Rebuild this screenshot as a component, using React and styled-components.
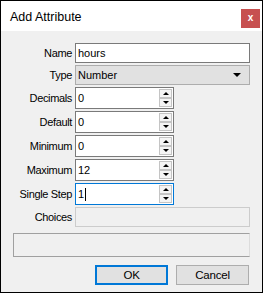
import React from "react";
import styled, { createGlobalStyle } from "styled-components";

const GlobalStyle = createGlobalStyle`
  body {
    margin: 0;
    font-family: "Liberation Sans", Arial, sans-serif;
    color: #000;
  }
`;

const Window = styled.div`
  width: 263px;
  height: 293px;
  box-sizing: border-box;
  border: 1px solid #000;
  display: flex;
  flex-direction: column;
  background: #f0f0f0;
`;

const TitleBar = styled.div`
  height: 30px;
  background: #fff;
  display: flex;
  align-items: flex-start;
  justify-content: space-between;
  padding: 0 2px 0 9px;
`;

const Title = styled.div`
  font-size: 12.5px;
  margin-top: 9px;
`;

const Close = styled.div`
  width: 19px;
  height: 19px;
  margin-top: 8px;
  background: #c75050;
  color: #fff;
  font-weight: bold;
  font-size: 10px;
  display: flex;
  align-items: center;
  justify-content: center;
  line-height: 1;
  padding-bottom: 2px;
  box-sizing: border-box;
`;

const Body = styled.div`
  flex: 1;
  padding: 12px 12px 0;
  display: flex;
  flex-direction: column;
`;

const Form = styled.div`
  display: grid;
  grid-template-columns: 59px 175px;
  column-gap: 3px;
  row-gap: 2px;
  align-items: center;
`;

const Label = styled.div`
  font-size: 11px;
  letter-spacing: -0.35px;
  text-align: right;
  white-space: nowrap;
`;

const Field = styled.div`
  box-sizing: border-box;
  height: ${(p) => p.$h || 20}px;
  width: ${(p) => (p.$w ? `${p.$w}px` : "100%")};
  border: 1px solid ${(p) => p.$border || "#7a7a7a"};
  background: ${(p) => p.$bg || "#fff"};
  display: flex;
  align-items: center;
  font-size: 11px;
  padding-left: 2px;
`;

const Value = styled.div`
  flex: 1;
  display: flex;
  align-items: center;
`;

const Caret = styled.span`
  display: inline-block;
  width: 1px;
  height: 13px;
  background: #000;
  margin-left: 1px;
`;

const Arrow = styled.span`
  width: 0;
  height: 0;
  border-left: ${(p) => p.$size}px solid transparent;
  border-right: ${(p) => p.$size}px solid transparent;
  ${(p) =>
    p.$up
      ? `border-bottom: ${p.$tall}px solid #000;`
      : `border-top: ${p.$tall}px solid #000;`}
`;

const DropArrow = styled.div`
  width: 20px;
  display: flex;
  justify-content: center;
  margin-right: 2px;
`;

const Spin = styled.div`
  width: 13px;
  height: 18px;
  margin-right: 1px;
  display: flex;
  flex-direction: column;
  gap: 0;
`;

const SpinButton = styled.div`
  flex: 1;
  box-sizing: border-box;
  border: 1px solid #c4c4c4;
  background: #f4f4f4;
  display: flex;
  align-items: center;
  justify-content: center;
`;

const Frame = styled.div`
  margin-top: 6px;
  height: 24px;
  box-sizing: border-box;
  border: 1px solid #a0a0a0;
  border-right-color: #dcdcdc;
`;

const Buttons = styled.div`
  margin-top: 8px;
  display: flex;
  justify-content: flex-end;
  gap: 8px;
  padding-right: 1px;
`;

const Button = styled.div`
  box-sizing: border-box;
  width: 73px;
  height: 20px;
  background: #e1e1e1;
  border: ${(p) => (p.$default ? "2px solid #0078d7" : "1px solid #adadad")};
  display: flex;
  align-items: center;
  justify-content: center;
  font-size: 11.5px;
  letter-spacing: -0.2px;
`;

function SpinBox({ value, focused }) {
  return (
    <Field $h={22} $w={99} $border={focused ? "#0078d7" : "#7a7a7a"}>
      <Value>
        {value}
        {focused && <Caret />}
      </Value>
      <Spin>
        <SpinButton>
          <Arrow $up $size={3} $tall={3} />
        </SpinButton>
        <SpinButton>
          <Arrow $size={3} $tall={3} />
        </SpinButton>
      </Spin>
    </Field>
  );
}

const spins = [
  { label: "Decimals", value: "0" },
  { label: "Default", value: "0" },
  { label: "Minimum", value: "0" },
  { label: "Maximum", value: "12" },
  { label: "Single Step", value: "1", focused: true },
];

export default function App() {
  return (
    <>
      <GlobalStyle />
      <Window>
        <TitleBar>
          <Title>Add Attribute</Title>
          <Close>x</Close>
        </TitleBar>
        <Body>
          <Form>
            <Label>Name</Label>
            <Field>hours</Field>
            <Label>Type</Label>
            <Field $bg="#e1e1e1" $border="#adadad">
              <Value>Number</Value>
              <DropArrow>
                <Arrow $size={4} $tall={4} />
              </DropArrow>
            </Field>
            {spins.map((s) => (
              <React.Fragment key={s.label}>
                <Label>{s.label}</Label>
                <SpinBox value={s.value} focused={s.focused} />
              </React.Fragment>
            ))}
            <Label>Choices</Label>
            <Field $bg="#f0f0f0" $border="#cccccc" />
          </Form>
          <Frame />
          <Buttons>
            <Button $default>OK</Button>
            <Button>Cancel</Button>
          </Buttons>
        </Body>
      </Window>
    </>
  );
}
